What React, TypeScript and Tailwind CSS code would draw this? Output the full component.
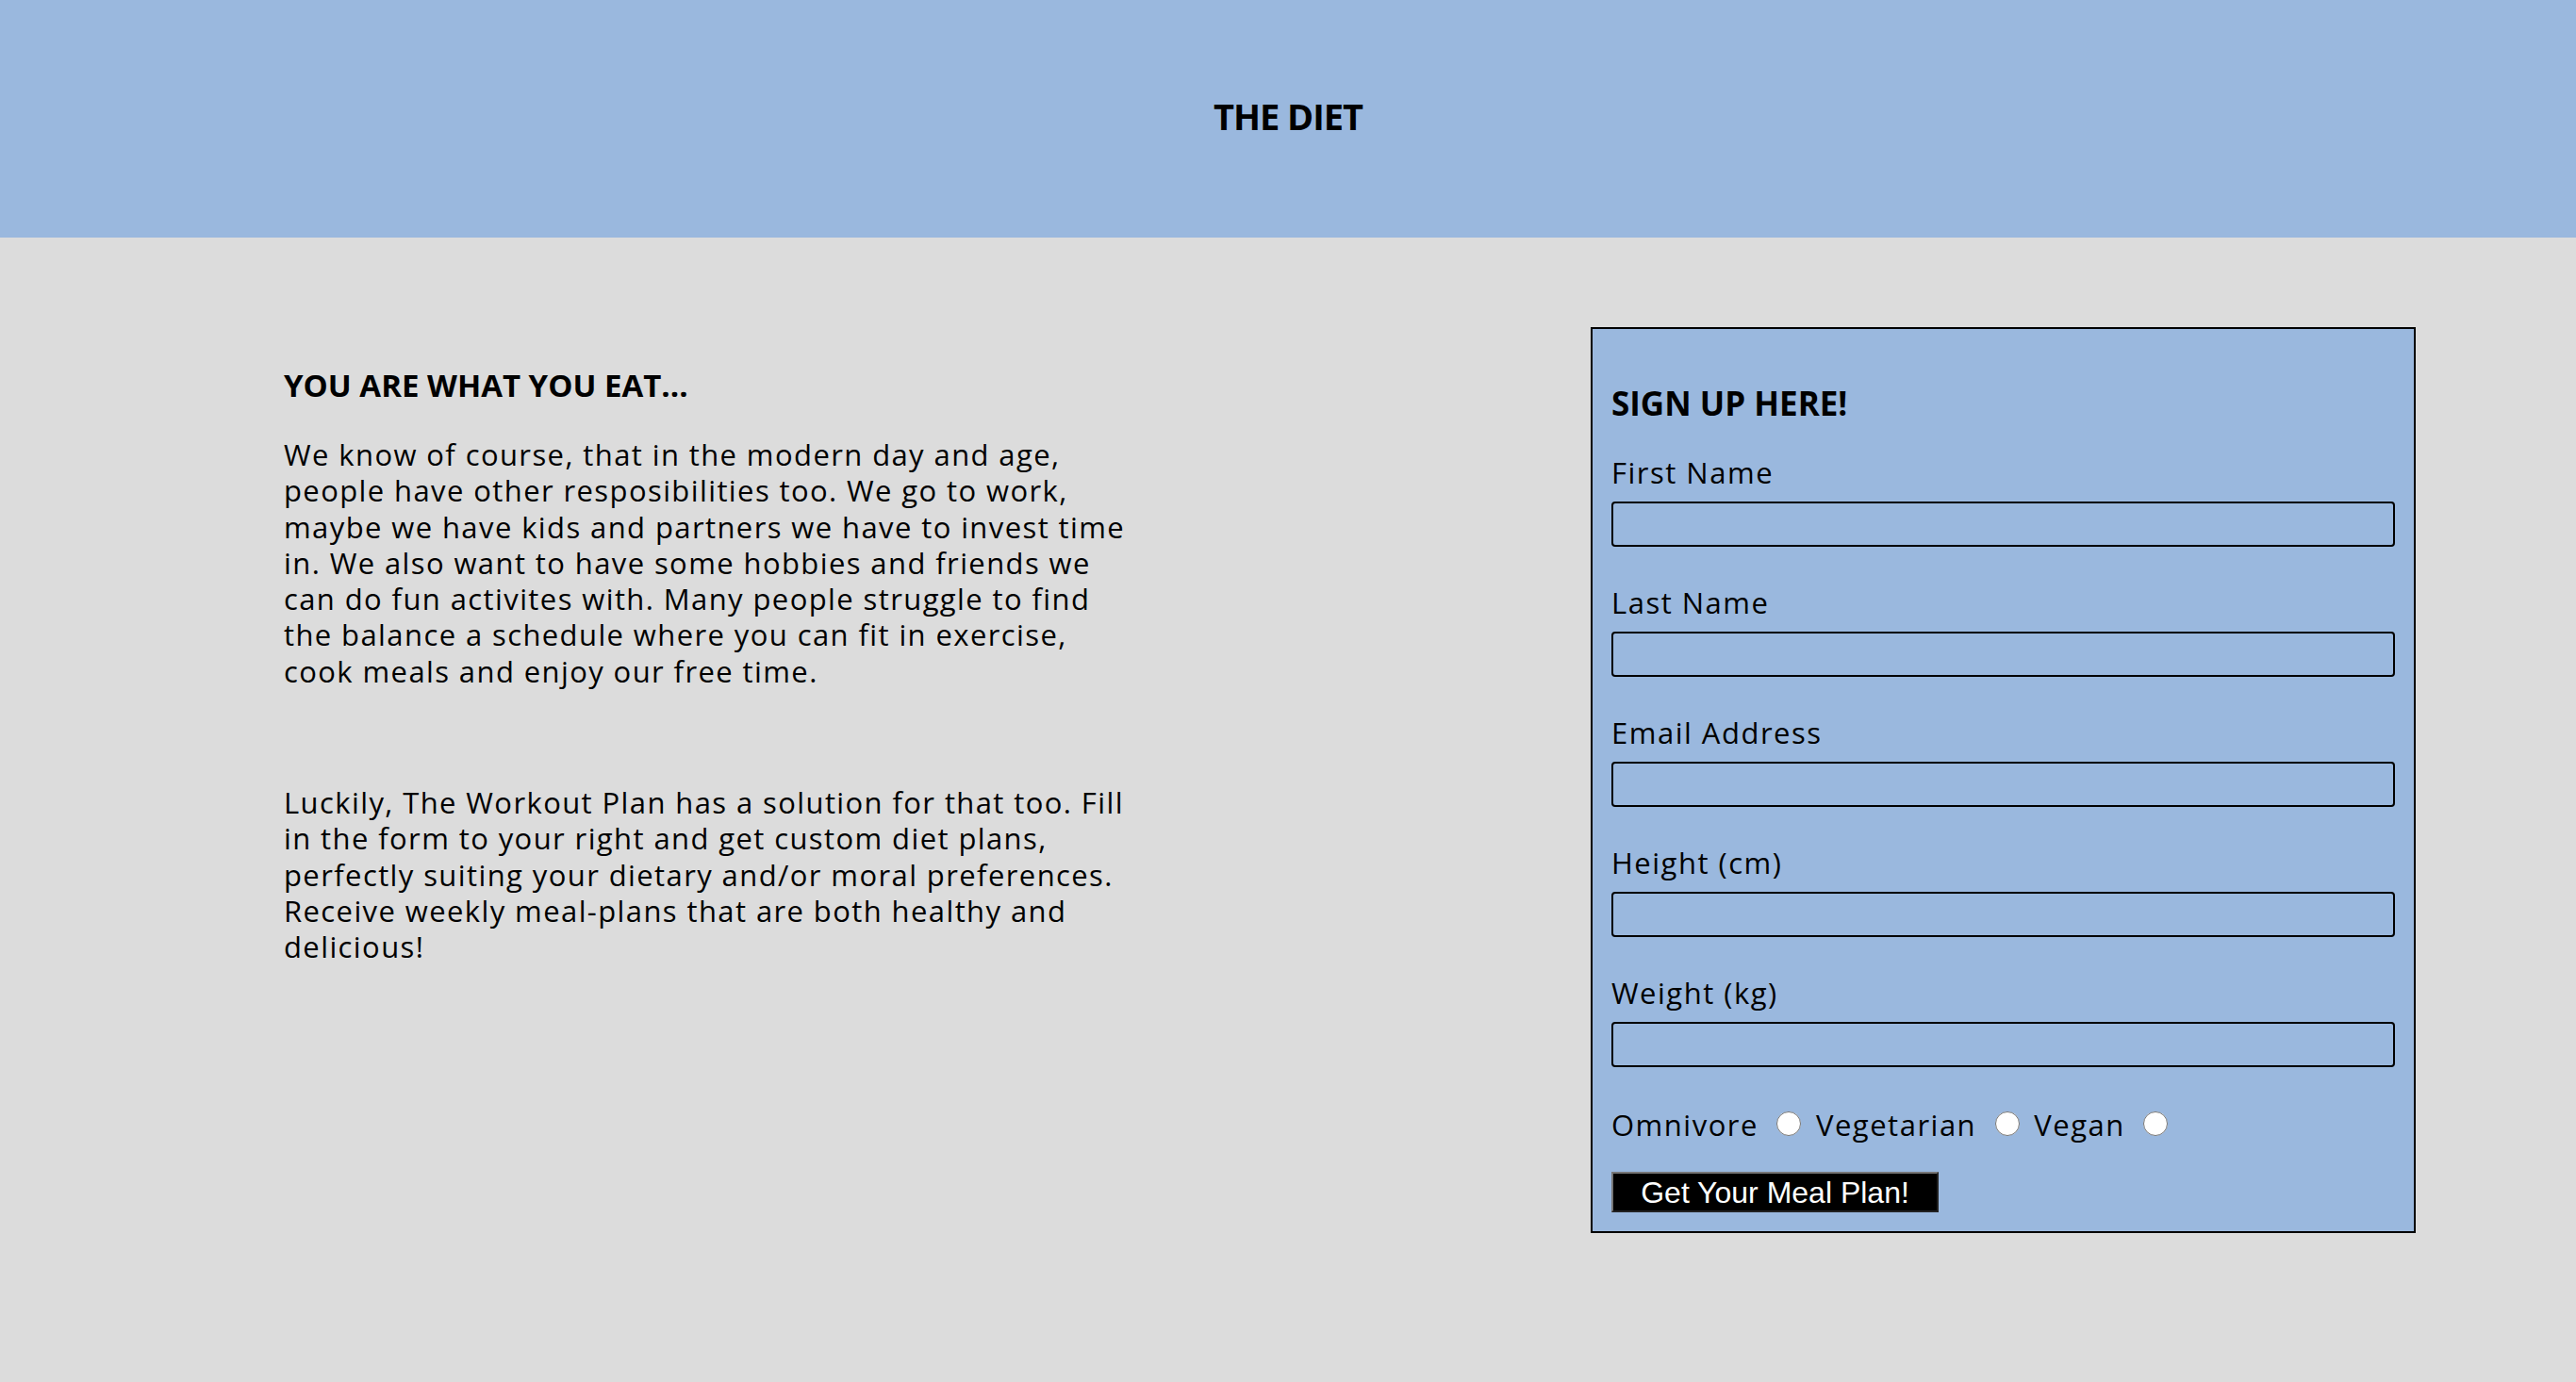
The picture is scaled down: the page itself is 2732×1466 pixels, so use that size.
const labelFont = "font-['Open_Sans',sans-serif]";

function Field({ label, type = 'text' }: { label: string; type?: string }) {
  return (
    <div className="flex flex-col">
      <label className={`${labelFont} text-[31px] leading-[38px] tracking-[1.5px] text-black`}>{label}</label>
      <input
        type={type}
        className="mt-[12px] h-[48px] w-full rounded-[4px] border-2 border-black bg-transparent px-2 text-[28px] outline-none"
      />
    </div>
  );
}

function SignUpForm() {
  return (
    <form className="mr-[170px] ml-auto w-[875px] border-2 border-black bg-[#9ab8de] px-[20px] pt-[20px] pb-[20px]">
      <h2 className="mt-[41px] font-['Open_Sans',sans-serif] text-[35px] font-bold leading-none text-black">
        SIGN UP HERE!
      </h2>
      <div className="mt-[37px] flex flex-col gap-[40px]">
        <Field label="First Name" />
        <Field label="Last Name" />
        <Field label="Email Address" type="email" />
        <Field label="Height (cm)" type="number" />
        <Field label="Weight (kg)" type="number" />
      </div>
      <div className={`${labelFont} mt-[42px] text-[31px] leading-[38px] tracking-[1.5px] text-black`}>
        Omnivore <input type="radio" name="diet" className="mr-[6px] ml-[10px] h-[26px] w-[26px]" />{' '}
        Vegetarian <input type="radio" name="diet" className="mr-[6px] ml-[10px] h-[26px] w-[26px]" />{' '}
        Vegan <input type="radio" name="diet" className="mr-[6px] ml-[10px] h-[26px] w-[26px]" />
      </div>
      <button
        type="submit"
        className="mt-[31px] h-[43px] w-[347px] border-2 border-[#777777] bg-black font-['Liberation_Sans',Arial,sans-serif] text-[32px] leading-none text-white [border-style:outset]"
      >
        Get Your Meal Plan!
      </button>
    </form>
  );
}

export default function App() {
  return (
    <div className="min-h-screen bg-[#dcdcdc]">
      <header className="flex h-[252px] justify-center bg-[#9ab8de] pt-[103px]">
        <h1 className="font-['Open_Sans',sans-serif] text-[38px] font-bold leading-[40px] tracking-[-1px] text-black">
          THE DIET
        </h1>
      </header>
      <main className="flex items-start pt-[95px] pl-[301px] pb-[60px]">
        <section className="mt-[45px] w-[902px]">
          <h2 className="font-['Open_Sans',sans-serif] text-[33px] font-bold leading-none text-black">
            YOU ARE WHAT YOU EAT...
          </h2>
          <p className={`${labelFont} mt-[38px] text-[31px] leading-[38.3px] tracking-[1.4px] text-black`}>
            We know of course, that in the modern day and age, people have other resposibilities too. We go to
            work, maybe we have kids and partners we have to invest time in. We also want to have some hobbies and
            friends we can do fun activites with. Many people struggle to find the balance a schedule where you can
            fit in exercise, cook meals and enjoy our free time.
          </p>
          <p className={`${labelFont} mt-[101px] text-[31px] leading-[38.3px] tracking-[1.4px] text-black`}>
            Luckily, The Workout Plan has a solution for that too. Fill in the form to your right and get custom diet
            plans, perfectly suiting your dietary and/or moral preferences. Receive weekly meal-plans that are both
            healthy and delicious!
          </p>
        </section>
        <SignUpForm />
      </main>
    </div>
  );
}
